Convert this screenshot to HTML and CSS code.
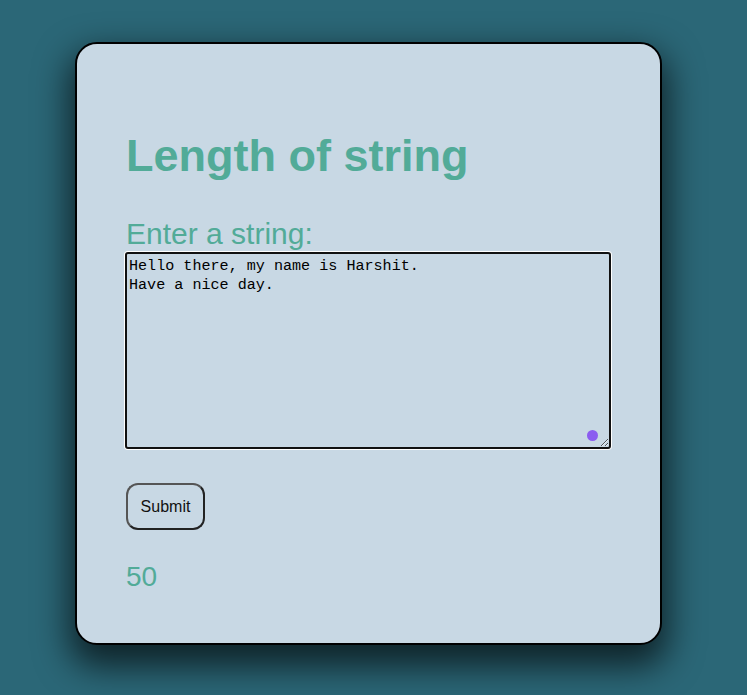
FILE: index.html
```html
<!DOCTYPE html>
<html>
<head>
<meta charset="utf-8">
<link rel="stylesheet" href="styles.css">
</head>
<body>
<div class="card">
  <h1 class="title">Length of string</h1>
  <label class="label" for="str">Enter a string:</label>
  <div class="field">
    <textarea id="str" class="input">Hello there, my name is Harshit.
Have a nice day.</textarea>
    <span class="dot"></span>
  </div>
  <button class="submit">Submit</button>
  <div class="result">50</div>
</div>
</body>
</html>
```
FILE: styles.css
```css
html, body {
  margin: 0;
  padding: 0;
}
body {
  background: #2b6777;
  height: 695px;
  overflow: hidden;
  font-family: "Liberation Sans", Arial, sans-serif;
}
.card {
  box-sizing: border-box;
  width: 587px;
  height: 603px;
  margin: 42px 0 0 75px;
  padding: 84px 50px 0 49px;
  background: #c8d8e4;
  border: 2px solid #000;
  border-radius: 22px;
  box-shadow: 0 16px 34px 6px rgba(0, 0, 0, 0.65);
}
.title {
  margin: 0;
  font-size: 45px;
  line-height: 55px;
  font-weight: bold;
  color: #52ab98;
}
.label {
  display: block;
  margin-top: 34px;
  font-size: 30px;
  line-height: 34px;
  color: #52ab98;
}
.field {
  position: relative;
  margin-top: 1px;
  width: 486px;
  height: 197px;
  margin-left: -1px;
}
.input {
  box-sizing: border-box;
  display: block;
  width: 486px;
  height: 197px;
  margin: 0;
  padding: 3px 2px;
  background: #c8d8e4;
  border: 2px solid #111;
  border-radius: 3px;
  box-shadow: 0 0 0 1px #ffffff;
  outline: none;
  resize: both;
  font-family: "Liberation Mono", "DejaVu Sans Mono", monospace;
  font-size: 15.1px;
  line-height: 19px;
  color: #000;
}
.dot {
  position: absolute;
  right: 13px;
  bottom: 8px;
  width: 11px;
  height: 11px;
  border-radius: 50%;
  background: #8b5cf0;
}
.submit {
  display: block;
  box-sizing: border-box;
  margin-top: 34px;
  width: 79px;
  height: 47px;
  padding: 0;
  background: #c8d8e4;
  border: 2px solid #222;
  border-top-color: #555;
  border-left-color: #555;
  border-radius: 12px;
  font-family: "Liberation Sans", Arial, sans-serif;
  font-size: 16px;
  color: #111;
}
.result {
  margin-top: 31px;
  font-size: 28px;
  line-height: 32px;
  color: #52ab98;
}
```
